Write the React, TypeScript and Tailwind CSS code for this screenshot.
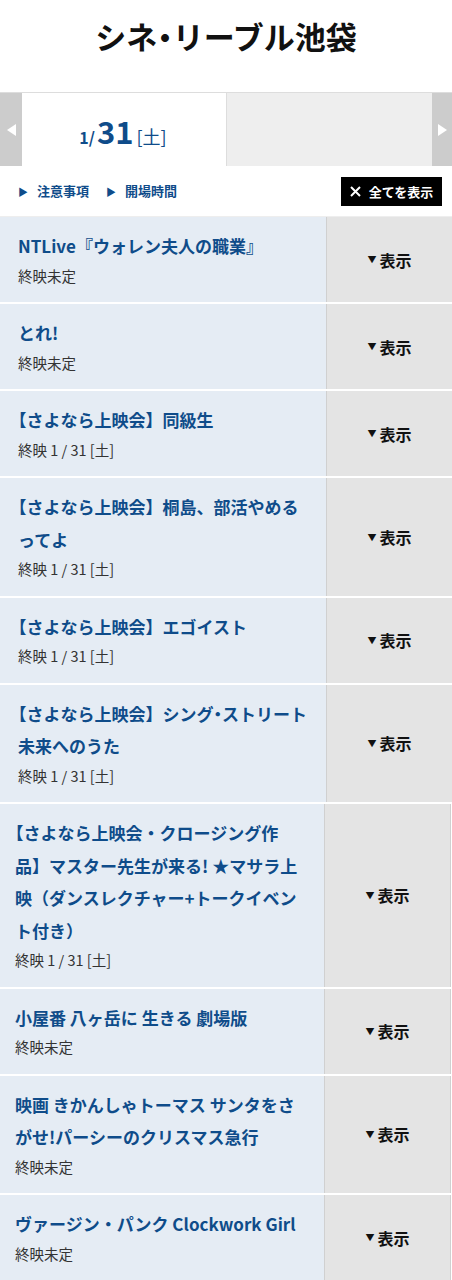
import React from "react";

const F = { fontFamily: '"Noto Sans CJK JP", "Noto Sans", sans-serif' };

function H({ c }: { c: string }) {
  return <span className="[font-feature-settings:'halt']">{c}</span>;
}

type Item = { title: React.ReactNode; sub: string };

const items: Item[] = [
  { title: "NTLive『ウォレン夫人の職業』", sub: "終映未定" },
  { title: "とれ!", sub: "終映未定" },
  {
    title: (
      <>
        <H c="【" />さよなら上映会】同級生
      </>
    ),
    sub: "終映 1 / 31 [土]",
  },
  {
    title: (
      <>
        <H c="【" />さよなら上映会】桐島、部活やめるってよ
      </>
    ),
    sub: "終映 1 / 31 [土]",
  },
  {
    title: (
      <>
        <H c="【" />さよなら上映会】エゴイスト
      </>
    ),
    sub: "終映 1 / 31 [土]",
  },
  {
    title: (
      <>
        <H c="【" />さよなら上映会】シング<H c="・" />ストリート 未来へのうた
      </>
    ),
    sub: "終映 1 / 31 [土]",
  },
  {
    title: (
      <>
        <H c="【" />さよなら上映会・クロージング作品】マスター先生が来る! ★マサラ上映（ダンスレクチャー+トークイベント付き）
      </>
    ),
    sub: "終映 1 / 31 [土]",
  },
  { title: "小屋番 八ヶ岳に 生きる 劇場版", sub: "終映未定" },
  { title: "映画 きかんしゃトーマス サンタをさがせ!パーシーのクリスマス急行", sub: "終映未定" },
  { title: "ヴァージン・パンク Clockwork Girl", sub: "終映未定" },
];

function Row({ item, alt }: { item: Item; alt: boolean }) {
  return (
    <div className={`flex border-b-2 border-white ${alt ? "mr-[1px]" : ""}`}>
      <div
        className={`flex-1 min-w-0 bg-[#e5ecf4] ${
          alt ? "pl-[15px] pr-[23px]" : "pl-[18px] pr-[14px]"
        } pt-[13px] pb-[13.5px]`}
      >
        <div className="text-[17px] leading-[32.5px] font-bold text-[#0f4c8a]">{item.title}</div>
        <div className="text-[14.5px] leading-[26px] text-[#333333]">{item.sub}</div>
      </div>
      <div
        className={`${
          alt ? "w-[127px] border-r border-r-[#d0d0d0]" : "w-[126px]"
        } shrink-0 bg-[#e4e4e4] border-l border-l-[#d0d0d0] flex items-center justify-center`}
      >
        <span className="text-[9px] text-[#111] mr-[3px] mt-[1px]">▼</span>
        <span className="text-[16px] font-bold text-[#111]">表示</span>
      </div>
    </div>
  );
}

export default function App() {
  return (
    <div style={F} className="w-[452px] bg-white">
      <div className="h-[92px] flex justify-center pt-[12px]">
        <h1 className="text-[31px] leading-[48px] font-bold text-[#111]">
          シネ<H c="・" />リーブル池袋
        </h1>
      </div>
      <div className="border-t border-[#dddddd] flex h-[74px]">
        <div className="w-[22px] bg-[#cccccc] flex items-center justify-center">
          <svg width="9" height="12" viewBox="0 0 9 12">
            <polygon points="9,0 9,12 0,6" fill="#ffffff" />
          </svg>
        </div>
        <div className="w-[204px] bg-white flex items-center justify-center pt-[2px] pr-[2px]">
          <span className="text-[#0f4c8a] font-bold flex items-baseline">
            <span className="text-[16px]">1/</span>
            <span className="text-[31px] leading-[40px] ml-[2px]">31</span>
            <span className="text-[18px] font-normal ml-[3px]">[土]</span>
          </span>
        </div>
        <div className="flex-1 bg-[#eeeeee] border-l border-[#dddddd]"></div>
        <div className="w-[20px] bg-[#cccccc] flex items-center justify-center">
          <svg width="9" height="12" viewBox="0 0 9 12">
            <polygon points="0,0 0,12 9,6" fill="#ffffff" />
          </svg>
        </div>
      </div>
      <div className="flex items-center h-[51px] pl-[18px] pr-[10px] border-b border-[#eeeeee]">
        <div className="flex items-center text-[13px] font-bold text-[#0f4c8a]">
          <span className="text-[10px] mr-[9px]">▶</span>
          <span>注意事項</span>
        </div>
        <div className="flex items-center text-[13px] font-bold text-[#0f4c8a] ml-[17px]">
          <span className="text-[10px] mr-[9px]">▶</span>
          <span>開場時間</span>
        </div>
        <div className="ml-auto bg-black text-white h-[29px] w-[101px] flex items-center justify-center text-[13px] font-bold mt-[1px]">
          <svg width="11" height="11" viewBox="0 0 11 11" className="mr-[8px]">
            <path d="M1 1 L10 10 M10 1 L1 10" stroke="#fff" strokeWidth="2" />
          </svg>
          <span>全てを表示</span>
        </div>
      </div>
      <div>
        {items.map((it, i) => (
          <Row key={i} item={it} alt={i >= 6} />
        ))}
      </div>
    </div>
  );
}
